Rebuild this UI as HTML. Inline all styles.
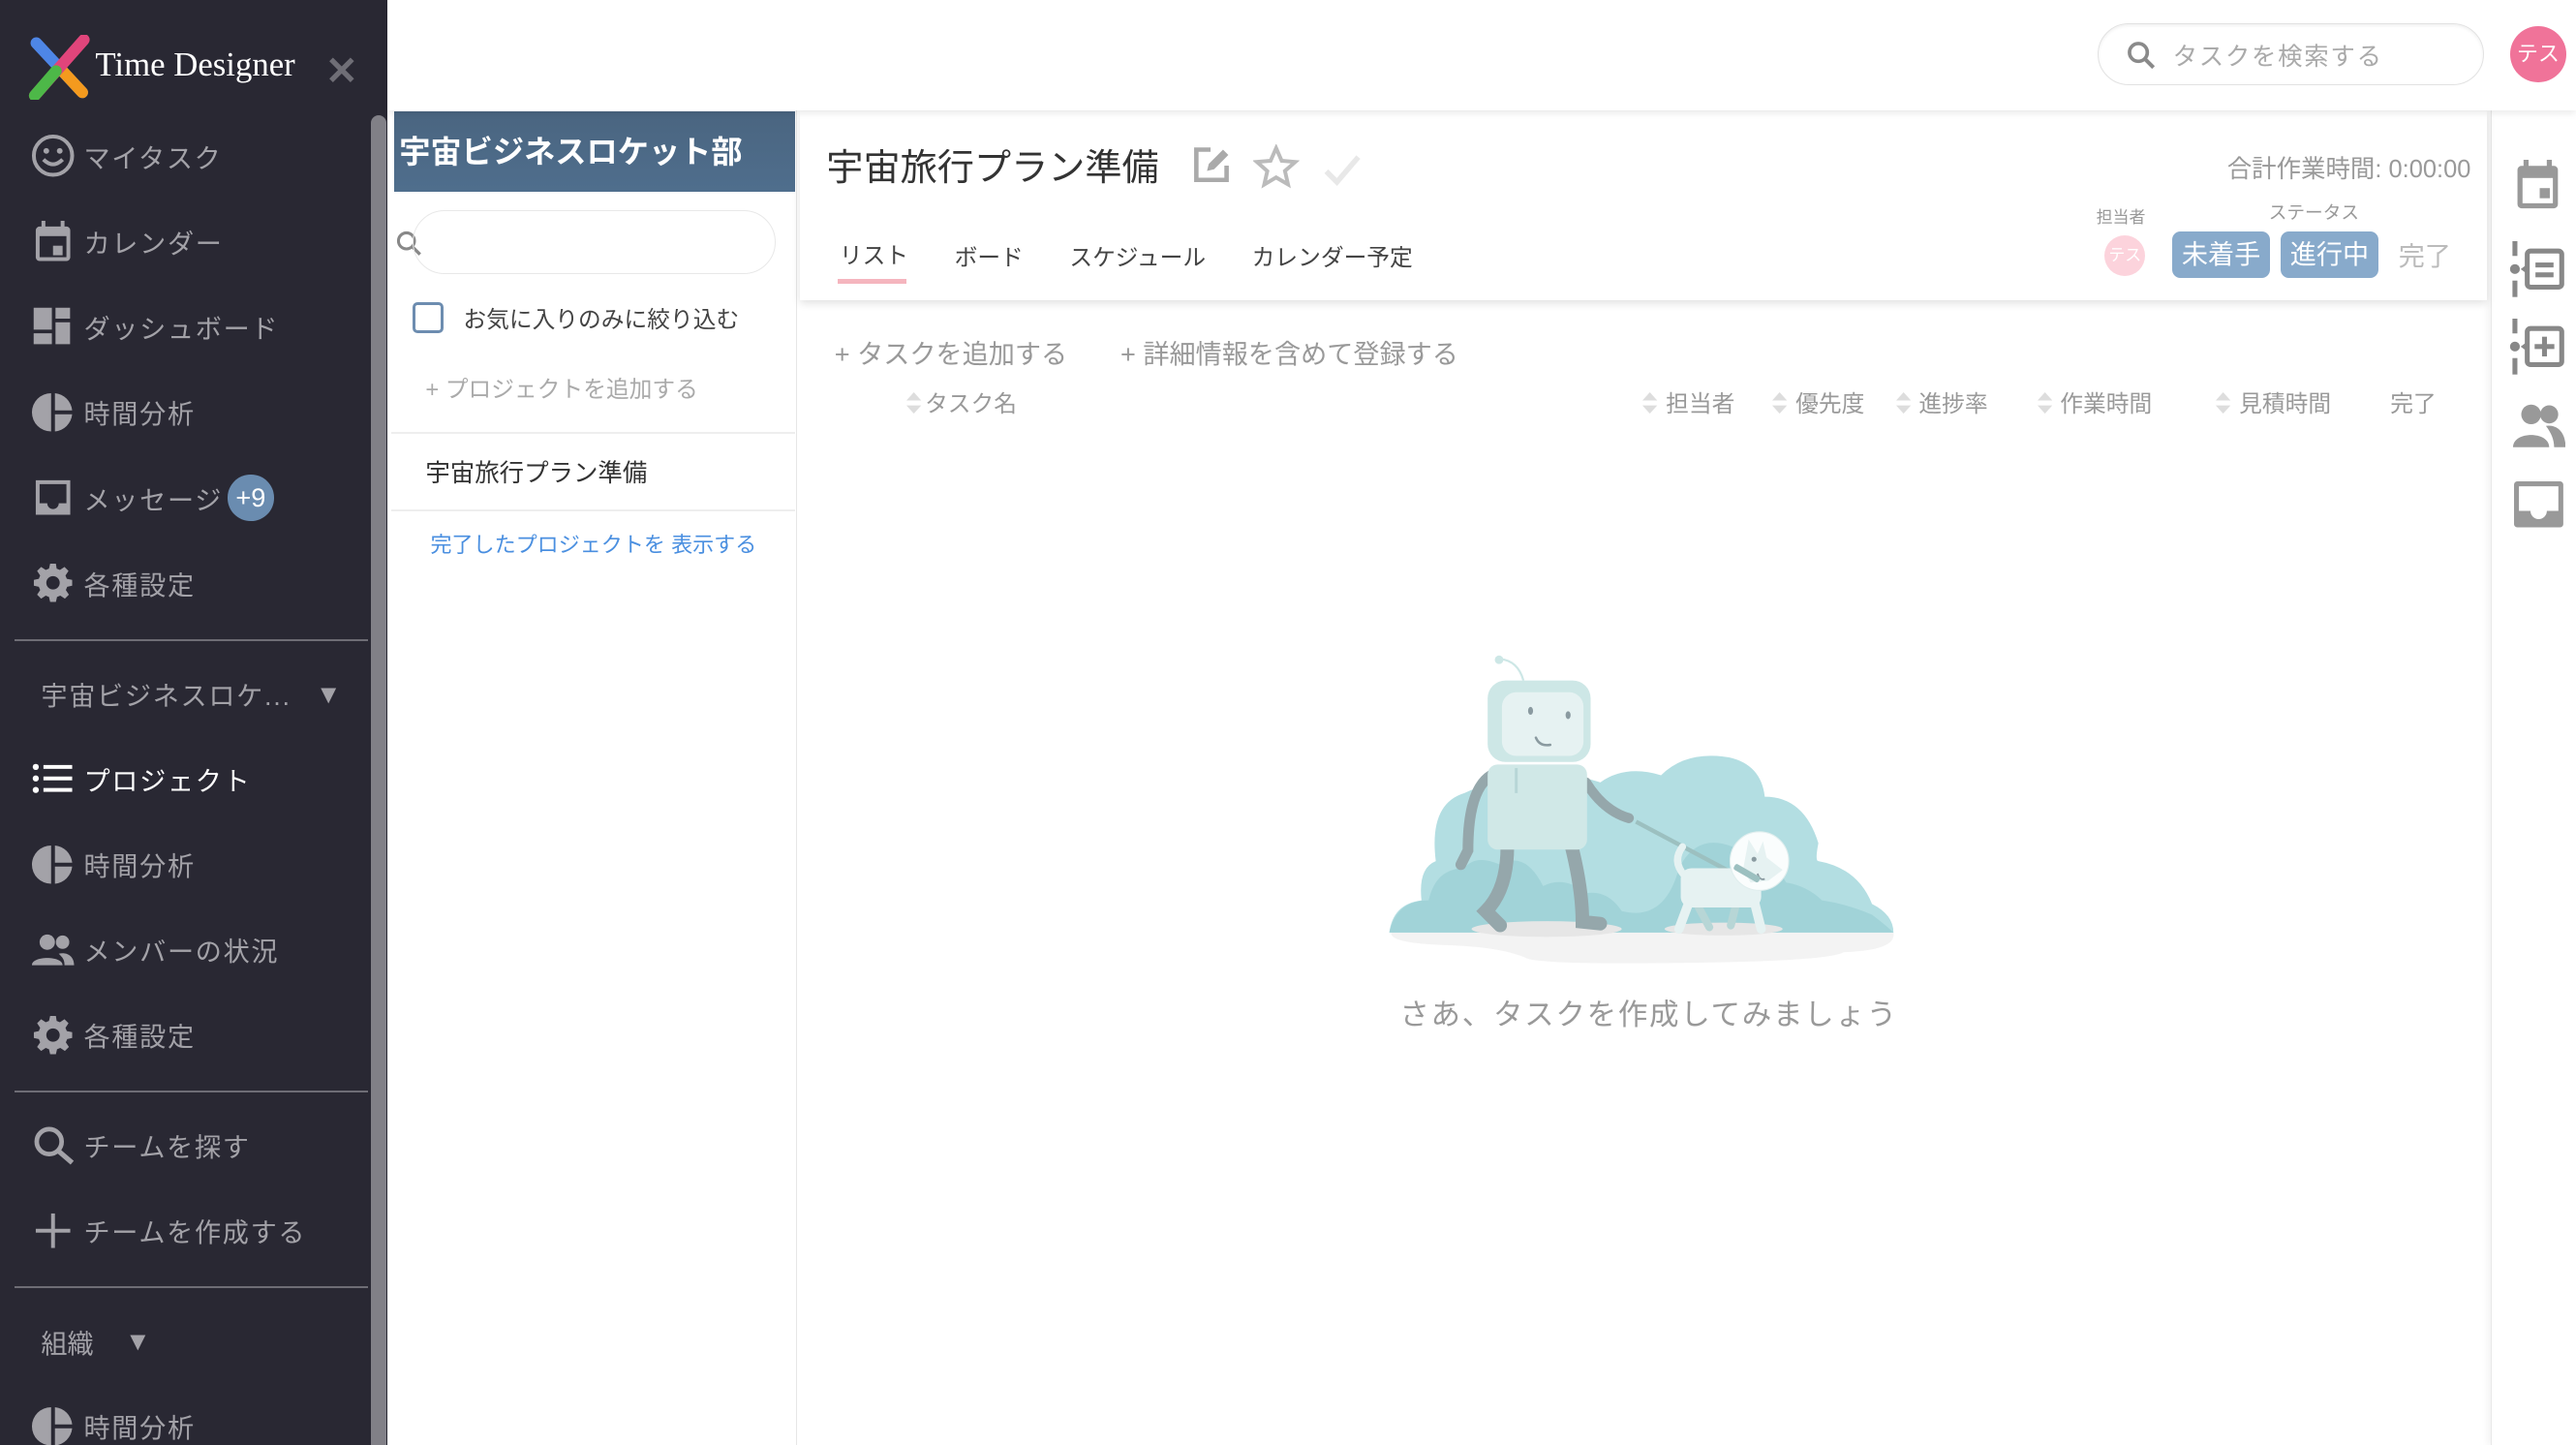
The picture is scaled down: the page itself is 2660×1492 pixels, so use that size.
<!DOCTYPE html>
<html><head><meta charset="utf-8">
<style>
*{margin:0;padding:0;box-sizing:border-box}
html,body{width:2660px;height:1492px;overflow:hidden;background:#fff}
#root{zoom:1.6964;width:1568px;height:880px;position:relative;font-family:"Liberation Sans","Noto Sans CJK JP",sans-serif;overflow:hidden}
.abs{position:absolute}
#side{left:0;top:0;width:236px;height:880px;background:#292833}
.nav{position:absolute;left:18px;display:flex;align-items:center;color:#a3a2a8;font-size:16px;letter-spacing:1px;height:30px}
.nav svg{width:28px;height:28px;margin-right:5px;flex:none}
.hr{position:absolute;left:9px;width:215px;height:1px;background:#6e6d75}
.t{position:absolute;white-space:nowrap}
.srt{display:inline-block;width:9px;height:13px;margin-right:5px;vertical-align:-1px}
</style></head><body><div id="root">

<div id="side" class="abs">
  <svg class="abs" style="left:17px;top:21px" width="38" height="40" viewBox="0 0 38 40">
    <line x1="5" y1="5" x2="33" y2="35" stroke="#4e86e6" stroke-width="7" stroke-linecap="round"/>
    <line x1="20" y1="21" x2="33" y2="35" stroke="#f49a1e" stroke-width="7" stroke-linecap="round"/>
    <line x1="34" y1="3" x2="4" y2="37" stroke="#e0457b" stroke-width="7" stroke-linecap="round"/>
    <line x1="17" y1="22" x2="4" y2="37" stroke="#4db848" stroke-width="7" stroke-linecap="round"/>
  </svg>
  <div class="t" style="left:58px;top:28px;color:#fff;font-family:'Liberation Serif',serif;font-size:20.5px">Time Designer</div>
  <div class="t" style="left:198px;top:29px;color:#6f6e76;font-size:24px;font-weight:bold">✕</div>
  <div class="abs" style="left:226px;top:70px;width:9px;height:810px;background:#818087;border-radius:5px 5px 0 0"></div>

  <div class="nav" style="top:80px"><svg viewBox="0 0 24 24"><circle cx="12" cy="12" r="10" fill="none" stroke="#a3a2a8" stroke-width="2"/><circle cx="8.5" cy="9.5" r="1.5" fill="#a3a2a8"/><circle cx="15.5" cy="9.5" r="1.5" fill="#a3a2a8"/><path d="M7 14q5 5 10 0" fill="none" stroke="#a3a2a8" stroke-width="2"/></svg>マイタスク</div>
  <div class="nav" style="top:132px"><svg viewBox="0 0 24 24"><rect x="3" y="4" width="18" height="18" rx="2" fill="#a3a2a8"/><rect x="5" y="9" width="14" height="11" fill="#292833"/><rect x="12" y="14" width="5" height="5" fill="#a3a2a8"/><rect x="6" y="1" width="2" height="4" fill="#a3a2a8"/><rect x="16" y="1" width="2" height="4" fill="#a3a2a8"/></svg>カレンダー</div>
  <div class="nav" style="top:184px"><svg viewBox="0 0 24 24"><path d="M2 2h10v12H2zM2 16h10v6H2zM14 2h8v6h-8zM14 10h8v12h-8z" fill="#a3a2a8" transform="scale(.95)"/></svg>ダッシュボード</div>
  <div class="nav" style="top:236px"><svg viewBox="0 0 24 24"><path d="M11 2v20A10 10 0 0 1 11 2zM13 2a10 10 0 0 1 9 9h-9zM13 13h9a10 10 0 0 1-9 9z" fill="#a3a2a8"/></svg>時間分析</div>
  <div class="nav" style="top:288px"><svg viewBox="0 0 24 24"><path d="M3 3h18v18H3z" fill="#a3a2a8"/><path d="M5 5h14v10h-4a3 3 0 0 1-6 0H5z" fill="#292833"/></svg>メッセージ<span style="display:inline-block;margin-left:3px;width:28px;height:28px;border-radius:14px;background:#6a8cb0;color:#fff;font-size:16px;text-align:center;line-height:28px;letter-spacing:0">+9</span></div>
  <div class="nav" style="top:340px"><svg viewBox="0 0 24 24"><path fill-rule="evenodd" d="M12 8.5a3.5 3.5 0 1 0 0 7 3.5 3.5 0 0 0 0-7zM22 13.5v-3l-2.8-.6-.7-1.7 1.6-2.4-2.1-2.1-2.4 1.6-1.7-.7L13.5 2h-3l-.6 2.6-1.7.7-2.4-1.6-2.1 2.1 1.6 2.4-.7 1.7L2 10.5v3l2.6.6.7 1.7-1.6 2.4 2.1 2.1 2.4-1.6 1.7.7.6 2.6h3l.6-2.6 1.7-.7 2.4 1.6 2.1-2.1-1.6-2.4.7-1.7z" fill="#a3a2a8"/></svg>各種設定</div>
  <div class="hr" style="top:389px"></div>
  <div class="t" style="left:25px;top:411px;color:#a3a2a8;font-size:16px;letter-spacing:1px">宇宙ビジネスロケ...</div>
  <div class="t" style="left:192px;top:413px;color:#a3a2a8;font-size:16px">▼</div>
  <div class="nav" style="top:459px;color:#fff"><svg viewBox="0 0 24 24"><circle cx="3" cy="6" r="1.6" fill="#fff"/><circle cx="3" cy="12" r="1.6" fill="#fff"/><circle cx="3" cy="18" r="1.6" fill="#fff"/><rect x="7" y="5" width="15" height="2" fill="#fff"/><rect x="7" y="11" width="15" height="2" fill="#fff"/><rect x="7" y="17" width="15" height="2" fill="#fff"/></svg>プロジェクト</div>
  <div class="nav" style="top:511px"><svg viewBox="0 0 24 24"><path d="M11 2v20A10 10 0 0 1 11 2zM13 2a10 10 0 0 1 9 9h-9zM13 13h9a10 10 0 0 1-9 9z" fill="#a3a2a8"/></svg>時間分析</div>
  <div class="nav" style="top:563px"><svg viewBox="0 0 24 24"><circle cx="9" cy="8" r="4" fill="#a3a2a8"/><circle cx="17" cy="8" r="3.5" fill="#a3a2a8"/><path d="M1 20c0-5 16-5 16 0zM15 14c4-1 8 1 8 6h-5c0-3-1-4-3-6z" fill="#a3a2a8"/></svg>メンバーの状況</div>
  <div class="nav" style="top:615px"><svg viewBox="0 0 24 24"><path fill-rule="evenodd" d="M12 8.5a3.5 3.5 0 1 0 0 7 3.5 3.5 0 0 0 0-7zM22 13.5v-3l-2.8-.6-.7-1.7 1.6-2.4-2.1-2.1-2.4 1.6-1.7-.7L13.5 2h-3l-.6 2.6-1.7.7-2.4-1.6-2.1 2.1 1.6 2.4-.7 1.7L2 10.5v3l2.6.6.7 1.7-1.6 2.4 2.1 2.1 2.4-1.6 1.7.7.6 2.6h3l.6-2.6 1.7-.7 2.4 1.6 2.1-2.1-1.6-2.4.7-1.7z" fill="#a3a2a8"/></svg>各種設定</div>
  <div class="hr" style="top:664px"></div>
  <div class="nav" style="top:682px"><svg viewBox="0 0 24 24"><circle cx="10" cy="10" r="6.5" fill="none" stroke="#a3a2a8" stroke-width="2.4"/><line x1="15" y1="15" x2="22" y2="21" stroke="#a3a2a8" stroke-width="2.6"/></svg>チームを探す</div>
  <div class="nav" style="top:734px"><svg viewBox="0 0 24 24"><rect x="3" y="11" width="18" height="2" fill="#a3a2a8"/><rect x="11" y="3" width="2" height="18" fill="#a3a2a8"/></svg>チームを作成する</div>
  <div class="hr" style="top:783px"></div>
  <div class="t" style="left:25px;top:805px;color:#a3a2a8;font-size:16px">組織</div>
  <div class="t" style="left:76px;top:807px;color:#a3a2a8;font-size:16px">▼</div>
  <div class="nav" style="top:853px"><svg viewBox="0 0 24 24"><path d="M11 2v20A10 10 0 0 1 11 2zM13 2a10 10 0 0 1 9 9h-9zM13 13h9a10 10 0 0 1-9 9z" fill="#a3a2a8"/></svg>時間分析</div>
</div>

<div class="abs" style="left:236px;top:0;width:1332px;height:67px;background:#fff;box-shadow:0 2px 4px rgba(0,0,0,.08);z-index:2"></div>
<div class="abs" style="left:1277px;top:14px;width:235px;height:38px;border:1px solid #e2e2e2;border-radius:19px;z-index:3;box-shadow:inset 0 1px 2px rgba(0,0,0,.06)">
  <svg class="abs" style="left:16px;top:9px" width="20" height="20" viewBox="0 0 24 24"><circle cx="10" cy="10" r="6.5" fill="none" stroke="#8a8a8a" stroke-width="2.6"/><line x1="15" y1="15" x2="21" y2="21" stroke="#8a8a8a" stroke-width="2.8"/></svg>
  <div class="t" style="left:45px;top:8px;color:#aaa;font-size:15px;letter-spacing:1px">タスクを検索する</div>
</div>
<div class="abs" style="left:1528px;top:16px;width:34px;height:34px;border-radius:17px;background:#f07399;color:#fff;font-size:13px;text-align:center;line-height:34px;z-index:3">テス</div>

<div class="abs" style="left:238px;top:67px;width:247px;height:813px;background:#fff;border-right:1px solid #e6e6e6">
  <div class="abs" style="left:2px;top:1px;width:244px;height:49px;background:linear-gradient(#4a6580,#4f6e8d)"></div>
  <div class="t" style="left:5px;top:11px;color:#fff;font-size:19px;font-weight:bold">宇宙ビジネスロケット部</div>
  <svg class="abs" style="left:2px;top:72px" width="18" height="18" viewBox="0 0 24 24"><circle cx="10" cy="10" r="6.5" fill="none" stroke="#888" stroke-width="2.4"/><line x1="15" y1="15" x2="21" y2="21" stroke="#888" stroke-width="2.6"/></svg>
  <div class="abs" style="left:13px;top:61px;width:221px;height:39px;border:1px solid #e8e8e8;border-radius:20px"></div>
  <div class="abs" style="left:13px;top:117px;width:19px;height:19px;border:2px solid #6d8db0;border-radius:3px"></div>
  <div class="t" style="left:44px;top:116px;color:#444;font-size:14px">お気に入りのみに絞り込む</div>
  <div class="t" style="left:21px;top:158px;color:#aaa;font-size:14px">+ プロジェクトを追加する</div>
  <div class="abs" style="left:0;top:196px;width:246px;height:1px;background:#eee"></div>
  <div class="t" style="left:21px;top:209px;color:#333;font-size:15px">宇宙旅行プラン準備</div>
  <div class="abs" style="left:0;top:243px;width:246px;height:1px;background:#eee"></div>
  <div class="t" style="left:24px;top:254px;color:#4a8fe0;font-size:13px">完了したプロジェクトを 表示する</div>
</div>

<div class="abs" style="left:487px;top:68px;width:1027px;height:115px;background:#fff;box-shadow:0 2px 5px rgba(0,0,0,.12);z-index:1">
  <div class="t" style="left:16px;top:16px;color:#333;font-size:22.5px">宇宙旅行プラン準備</div>
  <svg class="abs" style="left:237px;top:20px" width="26" height="26" viewBox="0 0 24 24"><path d="M12 3H4v17h17v-8" fill="none" stroke="#aaa" stroke-width="2.5"/><path d="M10 15l1-4 8-8 3 3-8 8z" fill="#aaa"/></svg>
  <svg class="abs" style="left:276px;top:20px" width="28" height="28" viewBox="0 0 24 24"><path d="M12 2l2.9 6.6 7.1.6-5.4 4.7 1.6 7L12 17.3 5.8 21l1.6-7L2 9.2l7.1-.6z" fill="none" stroke="#bbb" stroke-width="2"/></svg>
  <svg class="abs" style="left:317px;top:22px" width="26" height="26" viewBox="0 0 24 24"><path d="M3 13l6 6L21 5" fill="none" stroke="#e8e8e8" stroke-width="3"/></svg>
  <div class="t" style="right:10px;top:23px;color:#999;font-size:15px">合計作業時間: 0:00:00</div>
  <div class="t" style="left:24px;top:76px;color:#444;font-size:14px">リスト</div>
  <div class="abs" style="left:23px;top:102px;width:42px;height:3px;background:#f5b5be"></div>
  <div class="t" style="left:94px;top:77px;color:#444;font-size:14px">ボード</div>
  <div class="t" style="left:164px;top:77px;color:#444;font-size:14px">スケジュール</div>
  <div class="t" style="left:275px;top:77px;color:#444;font-size:14px">カレンダー予定</div>
  <div class="t" style="left:789px;top:56px;color:#999;font-size:10px">担当者</div>
  <div class="t" style="left:894px;top:53px;color:#999;font-size:11px">ステータス</div>
  <div class="abs" style="left:794px;top:75px;width:25px;height:25px;border-radius:13px;background:#fcd3dc;color:#fff;font-size:10px;text-align:center;line-height:25px">テス</div>
  <div class="abs" style="left:835px;top:73px;width:60px;height:28px;border-radius:5px;background:#88aacb;color:#fff;font-size:16px;text-align:center;line-height:28px">未着手</div>
  <div class="abs" style="left:901px;top:73px;width:60px;height:28px;border-radius:5px;background:#88aacb;color:#fff;font-size:16px;text-align:center;line-height:28px">進行中</div>
  <div class="t" style="left:973px;top:75px;color:#bbb;font-size:16px">完了</div>
</div>

<div class="t" style="left:508px;top:203px;color:#999;font-size:16px">+ タスクを追加する</div>
<div class="t" style="left:682px;top:203px;color:#999;font-size:16px">+ 詳細情報を含めて登録する</div>
<div class="t" style="left:552px;top:234px;color:#999;font-size:14px"><svg class="srt" viewBox="0 0 9 13" style="margin-right:2px"><path d="M4.5 0L9 5H0zM4.5 13L0 8h9z" fill="#ddd"/></svg>タスク名</div>
<div class="t" style="left:1000px;top:234px;color:#999;font-size:14px"><svg class="srt" viewBox="0 0 9 13"><path d="M4.5 0L9 5H0zM4.5 13L0 8h9z" fill="#ddd"/></svg>担当者</div>
<div class="t" style="left:1079px;top:234px;color:#999;font-size:14px"><svg class="srt" viewBox="0 0 9 13"><path d="M4.5 0L9 5H0zM4.5 13L0 8h9z" fill="#ddd"/></svg>優先度</div>
<div class="t" style="left:1154px;top:234px;color:#999;font-size:14px"><svg class="srt" viewBox="0 0 9 13"><path d="M4.5 0L9 5H0zM4.5 13L0 8h9z" fill="#ddd"/></svg>進捗率</div>
<div class="t" style="left:1240px;top:234px;color:#999;font-size:14px"><svg class="srt" viewBox="0 0 9 13"><path d="M4.5 0L9 5H0zM4.5 13L0 8h9z" fill="#ddd"/></svg>作業時間</div>
<div class="t" style="left:1349px;top:234px;color:#999;font-size:14px"><svg class="srt" viewBox="0 0 9 13"><path d="M4.5 0L9 5H0zM4.5 13L0 8h9z" fill="#ddd"/></svg>見積時間</div>
<div class="t" style="left:1455px;top:234px;color:#999;font-size:14px">完了</div>

<svg class="abs" style="left:826px;top:376px" width="340" height="222" viewBox="0 0 1560 1020">
  <path d="M95 880 L1500 880 Q1510 930 1360 935 Q1320 960 900 965 Q500 970 470 950 Q400 920 250 915 Q90 910 95 880z" fill="#f3f3f3"/>
  <path d="M90 880 Q100 800 180 790 Q170 700 220 680 Q200 520 300 490 Q380 450 470 470 Q560 420 680 460 Q750 410 850 440 Q920 370 1040 390 Q1130 410 1140 500 Q1250 500 1290 630 Q1280 680 1290 680 Q1400 700 1440 800 Q1500 830 1500 880z" fill="#b3dee2"/>
  <path d="M90 880 Q110 790 200 790 Q220 700 300 700 Q330 660 400 690 Q470 650 520 750 Q580 720 640 770 Q700 760 740 820 Q860 850 900 700 Q950 600 1050 640 Q1150 650 1200 740 Q1260 750 1300 790 Q1370 800 1440 830 Q1480 860 1500 880z" fill="#a1d3d8"/>
  <ellipse cx="530" cy="870" rx="210" ry="22" fill="#e6e6e6"/>
  <ellipse cx="1025" cy="870" rx="165" ry="18" fill="#e6e6e6"/>
  <path d="M420 640 Q420 760 360 820 L400 860" fill="none" stroke="#95a7ab" stroke-width="38" stroke-linecap="round"/>
  <path d="M600 640 Q630 760 630 850 L680 855" fill="none" stroke="#95a7ab" stroke-width="38" stroke-linecap="round"/>
  <path d="M375 440 Q310 480 310 650 L290 690" fill="none" stroke="#95a7ab" stroke-width="30" stroke-linecap="round"/>
  <path d="M640 460 Q690 540 760 560" fill="none" stroke="#95a7ab" stroke-width="28" stroke-linecap="round"/>
  <line x1="780" y1="570" x2="1100" y2="740" stroke="#9cc0c0" stroke-width="12"/>
  <rect x="365" y="410" width="278" height="238" rx="28" fill="#d0e8e7"/>
  <line x1="445" y1="420" x2="445" y2="490" stroke="#b7d6d6" stroke-width="8"/>
  <path d="M465 175 Q450 120 400 115" fill="none" stroke="#cde7e6" stroke-width="6"/>
  <circle cx="397" cy="117" r="12" fill="#cde7e6"/>
  <rect x="365" y="175" width="288" height="228" rx="50" fill="#cde7e6"/>
  <rect x="405" y="208" width="228" height="178" rx="40" fill="#e6f2f2"/>
  <ellipse cx="485" cy="260" rx="7" ry="11" fill="#8a9aa0"/>
  <ellipse cx="590" cy="272" rx="7" ry="11" fill="#8a9aa0"/>
  <path d="M500 335 Q510 360 540 355" fill="none" stroke="#8a9aa0" stroke-width="7" stroke-linecap="round"/>
  <path d="M930 790 L900 870 M1110 790 L1130 870" stroke="#e6f2f2" stroke-width="26" stroke-linecap="round"/>
  <path d="M950 800 L985 865 M1060 800 L1045 860" stroke="#b7d6d6" stroke-width="22" stroke-linecap="round"/>
  <rect x="905" y="700" width="225" height="110" rx="30" fill="#e6f2f2"/>
  <path d="M915 720 Q880 680 910 640" fill="none" stroke="#e6f2f2" stroke-width="20" stroke-linecap="round"/>
  <circle cx="1125" cy="680" r="82" fill="#fafdfd" stroke="#e0eeee" stroke-width="3"/>
  <path d="M1080 700 L1095 620 L1120 660 L1135 625 L1145 670 L1190 705 L1150 735 L1100 740z" fill="#e6f2f2"/>
  <circle cx="1110" cy="675" r="7" fill="#8a9aa0"/>
  <path d="M1120 715 Q1125 735 1140 730" fill="none" stroke="#8a9aa0" stroke-width="5"/>
  <rect x="1050" y="705" width="80" height="18" rx="6" fill="#9cc0c0" transform="rotate(30 1090 714)"/>
</svg>
<div class="t" style="left:852px;top:603px;color:#999;font-size:18px;letter-spacing:1px">さあ、タスクを作成してみましょう</div>

<div class="abs" style="left:1516px;top:67px;width:52px;height:813px;background:#fff;border-left:1px solid #e8e8e8;box-shadow:-2px 0 4px rgba(0,0,0,.05)">
  <svg class="abs" style="left:13px;top:30px" width="30" height="32" viewBox="0 0 24 26"><rect x="2" y="3" width="20" height="21" rx="2" fill="#999"/><rect x="4.5" y="9" width="15" height="12.5" fill="#fff"/><rect x="13" y="14" width="5" height="5" fill="#999"/><rect x="5" y="0" width="2.5" height="5" fill="#999"/><rect x="16.5" y="0" width="2.5" height="5" fill="#999"/></svg>
  <svg class="abs" style="left:11px;top:80px" width="34" height="34" viewBox="0 0 34 34"><rect x="2" y="0" width="3" height="9" fill="#888"/><rect x="2" y="24" width="3" height="10" fill="#888"/><circle cx="3.5" cy="17" r="3" fill="#888"/><rect x="11" y="6" width="21" height="22" rx="2" fill="none" stroke="#888" stroke-width="3"/><path d="M11 14l-4 3 4 3z" fill="#888"/><rect x="16" y="13" width="11" height="3" fill="#888"/><rect x="16" y="19" width="11" height="3" fill="#888"/></svg>
  <svg class="abs" style="left:11px;top:127px" width="34" height="34" viewBox="0 0 34 34"><rect x="2" y="0" width="3" height="9" fill="#888"/><rect x="2" y="24" width="3" height="10" fill="#888"/><circle cx="3.5" cy="17" r="3" fill="#888"/><rect x="11" y="6" width="21" height="22" rx="2" fill="none" stroke="#888" stroke-width="3"/><path d="M11 14l-4 3 4 3z" fill="#888"/><rect x="20" y="11" width="3" height="12" fill="#888"/><rect x="15.5" y="15.5" width="12" height="3" fill="#888"/></svg>
  <svg class="abs" style="left:13px;top:178px" width="32" height="28" viewBox="0 0 32 28"><circle cx="11" cy="7" r="6" fill="#999"/><circle cx="22" cy="7" r="5.5" fill="#999"/><path d="M0 27c0-10 22-10 22 0zM20 14c6-1 12 3 12 13h-7c0-5-2-9-5-13z" fill="#999"/></svg>
  <svg class="abs" style="left:14px;top:226px" width="30" height="28" viewBox="0 0 30 28"><rect x="0" y="0" width="30" height="28" rx="2" fill="#999"/><path d="M3 3h24v15h-7a5 5 0 0 1-10 0H3z" fill="#fff"/></svg>
</div>

</div></body></html>
